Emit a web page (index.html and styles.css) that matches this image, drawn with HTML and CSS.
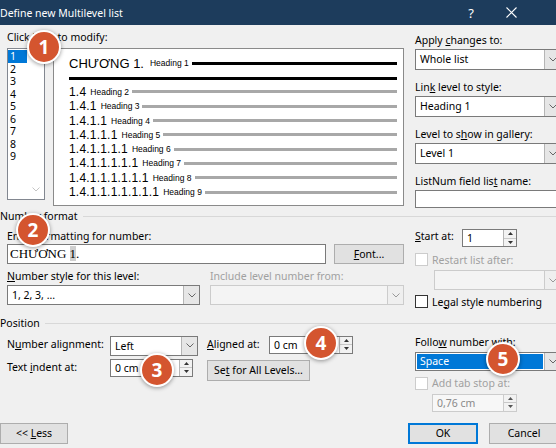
FILE: index.html
```html
<!DOCTYPE html>
<html>
<head>
<meta charset="utf-8">
<link rel="stylesheet" href="styles.css">
</head>
<body>
<div class="dialog">
  <div class="titlebar">
    <span class="title">Define new Multilevel list</span>
    <span class="tb-btn">?</span>
    <span class="tb-btn"><svg width="11" height="11" viewBox="0 0 11 11"><path d="M0.5 0.5 L10.5 10.5 M10.5 0.5 L0.5 10.5" stroke="#fff" stroke-width="1.1" fill="none"/></svg></span>
  </div>

  <div class="top">
    <div class="top-left">
      <div class="lbl">Click level to modify:</div>
      <div class="level-row">
        <div class="listbox">
          <ul class="items">
            <li class="sel">1</li><li>2</li><li>3</li><li>4</li><li>5</li><li>6</li><li>7</li><li>8</li><li>9</li>
          </ul>
          <div class="vscroll"><svg width="8" height="5" viewBox="0 0 8 5"><polyline points="0.5,0.5 4,4 7.5,0.5" fill="none" stroke="#c4c4c4" stroke-width="1"/></svg></div>
        </div>
        <div class="preview">
          <div class="pv-first"><span class="chuong">CHƯƠNG 1.</span><span class="hd">Heading 1</span><span class="ln black"></span></div>
          <div class="pv-rule"></div>
          <div class="pv-row"><span class="num">1.4</span><span class="hd">Heading 2</span><span class="ln"></span></div>
          <div class="pv-row"><span class="num">1.4.1</span><span class="hd">Heading 3</span><span class="ln"></span></div>
          <div class="pv-row"><span class="num">1.4.1.1</span><span class="hd">Heading 4</span><span class="ln"></span></div>
          <div class="pv-row"><span class="num">1.4.1.1.1</span><span class="hd">Heading 5</span><span class="ln"></span></div>
          <div class="pv-row"><span class="num">1.4.1.1.1.1</span><span class="hd">Heading 6</span><span class="ln"></span></div>
          <div class="pv-row"><span class="num">1.4.1.1.1.1.1</span><span class="hd">Heading 7</span><span class="ln"></span></div>
          <div class="pv-row"><span class="num">1.4.1.1.1.1.1.1</span><span class="hd">Heading 8</span><span class="ln"></span></div>
          <div class="pv-row"><span class="num">1.4.1.1.1.1.1.1.1</span><span class="hd">Heading 9</span><span class="ln"></span></div>
        </div>
      </div>
    </div>
    <div class="top-right">
      <div class="field">
        <div class="lbl">Apply <u>c</u>hanges to:</div>
        <div class="select wide"><span class="val">Whole list</span><span class="arrow"><svg width="8" height="5" viewBox="0 0 8 5"><polyline points="0.5,0.5 4,4 7.5,0.5" fill="none" stroke="#666" stroke-width="1"/></svg></span></div>
      </div>
      <div class="field">
        <div class="lbl">Lin<u>k</u> level to style:</div>
        <div class="select wide"><span class="val">Heading 1</span><span class="arrow"><svg width="8" height="5" viewBox="0 0 8 5"><polyline points="0.5,0.5 4,4 7.5,0.5" fill="none" stroke="#666" stroke-width="1"/></svg></span></div>
      </div>
      <div class="field">
        <div class="lbl">Level to s<u>h</u>ow in gallery:</div>
        <div class="select wide"><span class="val">Level 1</span><span class="arrow"><svg width="8" height="5" viewBox="0 0 8 5"><polyline points="0.5,0.5 4,4 7.5,0.5" fill="none" stroke="#666" stroke-width="1"/></svg></span></div>
      </div>
      <div class="field">
        <div class="lbl">ListNum field lis<u>t</u> name:</div>
        <div class="textbox listnum"></div>
      </div>
    </div>
  </div>

  <div class="group-head"><span>Number format</span><span class="rule"></span></div>
  <div class="nf-body">
    <div class="nf-left">
      <div class="lbl">Enter formatting for number:</div>
      <div class="nf-input-row">
        <div class="textbox fmt"><span>CHƯƠNG </span><span class="hl">1</span><span>.</span></div>
        <div class="btn font-btn"><span><u>F</u>ont...</span></div>
      </div>
      <div class="two-col lbl-row">
        <div class="lbl"><u>N</u>umber style for this level:</div>
        <div class="lbl dis">Include level number from:</div>
      </div>
      <div class="two-col">
        <div class="select"><span class="val">1, 2, 3, ...</span><span class="arrow"><svg width="8" height="5" viewBox="0 0 8 5"><polyline points="0.5,0.5 4,4 7.5,0.5" fill="none" stroke="#666" stroke-width="1"/></svg></span></div>
        <div class="select disabled"><span class="val"></span><span class="arrow"><svg width="8" height="5" viewBox="0 0 8 5"><polyline points="0.5,0.5 4,4 7.5,0.5" fill="none" stroke="#999" stroke-width="1"/></svg></span></div>
      </div>
    </div>
    <div class="nf-right">
      <div class="start-row">
        <span class="lbl start-lbl"><u>S</u>tart at:</span>
        <div class="spinbox start"><span class="v">1</span><span class="spin"><span><svg width="5" height="3" viewBox="0 0 5 3"><polygon points="0,3 2.5,0 5,3" fill="#333"/></svg></span><span><svg width="5" height="3" viewBox="0 0 5 3"><polygon points="0,0 2.5,3 5,0" fill="#333"/></svg></span></span></div>
      </div>
      <div class="check-row dis"><span class="cb cb-dis"></span><span>Restart list after:</span></div>
      <div class="select disabled restart"><span class="val"></span><span class="arrow"><svg width="8" height="5" viewBox="0 0 8 5"><polyline points="0.5,0.5 4,4 7.5,0.5" fill="none" stroke="#999" stroke-width="1"/></svg></span></div>
      <div class="check-row legal"><span class="cb"></span><span>Le<u>g</u>al style numbering</span></div>
    </div>
  </div>

  <div class="group-head"><span>Position</span><span class="rule"></span></div>
  <div class="pos-body">
    <div class="pos-left">
      <div class="lbl plbl">N<u>u</u>mber alignment:</div>
      <div class="select align-sel"><span class="val">Left</span><span class="arrow"><svg width="8" height="5" viewBox="0 0 8 5"><polyline points="0.5,0.5 4,4 7.5,0.5" fill="none" stroke="#666" stroke-width="1"/></svg></span></div>
      <div class="lbl plbl col3"><u>A</u>ligned at:</div>
      <div class="spinbox aligned"><span class="v">0 cm</span><span class="spin"><span><svg width="5" height="3" viewBox="0 0 5 3"><polygon points="0,3 2.5,0 5,3" fill="#333"/></svg></span><span><svg width="5" height="3" viewBox="0 0 5 3"><polygon points="0,0 2.5,3 5,0" fill="#333"/></svg></span></span></div>
      <div class="lbl plbl">Text <u>i</u>ndent at:</div>
      <div class="spinbox indent"><span class="v">0 cm</span><span class="spin"><span><svg width="5" height="3" viewBox="0 0 5 3"><polygon points="0,3 2.5,0 5,3" fill="#333"/></svg></span><span><svg width="5" height="3" viewBox="0 0 5 3"><polygon points="0,0 2.5,3 5,0" fill="#333"/></svg></span></span></div>
      <div class="btn setall"><span>Se<u>t</u> for All Levels...</span></div>
    </div>
    <div class="pos-right">
      <div class="lbl">Follo<u>w</u> number with:</div>
      <div class="select wide follow"><span class="val"><span class="hi">Space</span></span><span class="arrow"><svg width="8" height="5" viewBox="0 0 8 5"><polyline points="0.5,0.5 4,4 7.5,0.5" fill="none" stroke="#666" stroke-width="1"/></svg></span></div>
      <div class="check-row dis"><span class="cb cb-dis"></span><span>Add tab stop at:</span></div>
      <div class="spinbox tabstop disabled"><span class="v">0,76 cm</span><span class="spin"><span><svg width="5" height="3" viewBox="0 0 5 3"><polygon points="0,3 2.5,0 5,3" fill="#555"/></svg></span><span><svg width="5" height="3" viewBox="0 0 5 3"><polygon points="0,0 2.5,3 5,0" fill="#555"/></svg></span></span></div>
    </div>
  </div>

  <div class="footer">
    <div class="btn less"><span>&lt;&lt; <u>L</u>ess</span></div>
    <div class="btn ok"><span>OK</span></div>
    <div class="btn cancel"><span>Cancel</span></div>
  </div>

  <div class="badge b1">1</div>
  <div class="badge b2">2</div>
  <div class="badge b3">3</div>
  <div class="badge b4">4</div>
  <div class="badge b5">5</div>
</div>
</body>
</html>
```

FILE: styles.css
```css
* { box-sizing: border-box; }
body {
  margin: 0;
  background: #f0f0f0;
  font-family: "Noto Sans", "Open Sans", sans-serif;
  font-size: 10.5px;
  color: #000;
}
u { text-decoration: underline; text-underline-offset: 1px; }
.dialog {
  position: relative;
  width: 556px;
  height: 448px;
  overflow: hidden;
  background: #f0f0f0;
}
.titlebar {
  height: 25px;
  background: #1d3c5c;
  color: #fff;
  display: flex;
  align-items: center;
  padding-right: 25px;
}
.title { flex: 1; font-size: 10.5px; }
.tb-btn {
  width: 40px;
  text-align: center;
  font-size: 13px;
  display: flex;
  justify-content: center;
  align-items: center;
}
.lbl { line-height: 15px; height: 15px; white-space: nowrap; }
.dis { color: #a0a0a0; }

/* top */
.top { display: flex; height: 183px; }
.top-left { flex: none; width: 415px; padding-left: 7px; padding-top: 5px; }
.level-row { display: flex; margin-top: 3px; }
.listbox {
  width: 38px;
  height: 152px;
  border: 1px solid #828790;
  background: #fff;
  display: flex;
  flex: none;
}
.items { list-style: none; margin: 0; padding: 1px 0 0; width: 19px; }
.items li { height: 12.5px; line-height: 12.5px; padding-left: 2px; }
.items li.sel { background: #0078d7; color: #fff; }
.vscroll {
  flex: 1;
  display: flex;
  align-items: flex-end;
  justify-content: center;
  padding-bottom: 7px;
}
.preview {
  flex: none;
  width: 351px;
  height: 158px;
  margin-left: 8px;
  border: 1px solid #8a8a8a;
  background: #fff;
  padding: 5px 6px 0 15px;
  font-family: "Liberation Sans", Arial, sans-serif;
}
.pv-first { height: 18px; display: flex; align-items: center; }
.chuong { font-size: 13px; }
.hd { font-size: 8.5px; margin-left: 4px; white-space: nowrap; }
.pv-first .hd { margin-left: 6px; }
.ln { flex: 1; height: 3px; background: #a8a8a8; margin-left: 3px; }
.ln.black { background: #000; }
.pv-rule { height: 3px; background: #000; margin-top: 4.5px; margin-bottom: 5.3px; }
.pv-row { height: 14.3px; display: flex; align-items: center; }
.num { font-size: 12px; letter-spacing: 0.2px; white-space: nowrap; }

.top-right { flex: 1; min-width: 0; padding-top: 8px; }
.field { margin-bottom: 10px; }
.field .lbl { margin-bottom: 1px; }

.select {
  display: flex;
  height: 20px;
  border: 1px solid #7a7a7a;
  background: #fff;
}
.select .val { flex: 1; padding-left: 4px; line-height: 18px; white-space: nowrap; overflow: hidden; }
.select .arrow {
  width: 16px;
  flex: none;
  background: #e6e6e6;
  border-left: 1px solid #b5b5b5;
  display: flex;
  align-items: center;
  justify-content: center;
}
.select.wide { width: 146px; height: 21px; }
.select.wide .val { line-height: 19px; }
.select.disabled { border-color: #cccccc; background: #f4f4f4; }
.select.disabled .arrow { background: #efefef; border-left-color: #cccccc; }

.textbox { border: 1px solid #7a7a7a; background: #fff; }
.textbox.listnum { width: 146px; height: 18px; }

/* group heads */
.group-head { display: flex; align-items: center; height: 15px; margin-top: 0.5px; line-height: 15px; }
.group-head .rule { flex: 1; border-top: 1px solid #d8d8d8; margin-left: 5px; }

/* number format */
.nf-body { display: flex; height: 92px; }
.nf-left { flex: none; width: 404px; padding-left: 7px; padding-top: 5px; }
.nf-input-row { display: flex; margin-top: 0.5px; }
.textbox.fmt {
  width: 319px;
  height: 20px;
  padding-left: 2px;
  font-family: "Liberation Serif", "Times New Roman", serif;
  font-size: 13px;
  line-height: 18px;
  white-space: nowrap;
}
.hl { background: #cfcfcf; }
.btn {
  background: #e1e1e1;
  border: 1px solid #adadad;
  display: flex;
  align-items: center;
  justify-content: center;
  white-space: nowrap;
  flex: none;
}
.font-btn { width: 70px; height: 20px; margin-left: 8px; }
.two-col { display: grid; grid-template-columns: 193px 194px; column-gap: 10px; }
.lbl-row { margin-top: 4.5px; }
.lbl-row + .two-col { margin-top: 1.5px; }

.nf-right { flex: 1; min-width: 0; margin-left: 11px; padding-top: 5.5px; }
.start-row { display: flex; align-items: flex-start; height: 18px; }
.start-lbl { width: 47px; flex: none; }
.spinbox {
  display: flex;
  height: 18px;
  border: 1px solid #7a7a7a;
  background: #fff;
  flex: none;
}
.spinbox .v { flex: 1; padding-left: 4px; line-height: 16px; white-space: nowrap; }
.spin {
  width: 13px;
  display: flex;
  flex-direction: column;
  border-left: 1px solid #b5b5b5;
  background: #f2f2f2;
}
.spin > span { flex: 1; display: flex; align-items: center; justify-content: center; }
.spin > span + span { border-top: 1px solid #c8c8c8; }
.spinbox.start { width: 55px; }
.check-row { display: flex; align-items: center; height: 13px; margin-top: 6px; white-space: nowrap; }
.cb { width: 13px; height: 13px; border: 1px solid #333; background: #fff; margin-right: 4px; flex: none; }
.cb-dis { border-color: #cccccc; }
.select.restart { width: 127px; height: 20px; margin-left: 19px; margin-top: 4px; }
.check-row.legal { margin-top: 5px; }

/* position */
.pos-body { display: flex; height: 91.5px; }
.pos-left {
  flex: none;
  width: 404px;
  padding-left: 7px;
  padding-top: 4.5px;
  display: grid;
  grid-template-columns: 103px 88px 71px 84px;
  grid-template-rows: 20px 22px;
  row-gap: 3px;
  align-content: start;
  align-items: start;
}
.plbl { line-height: 16px; height: 16px; }
.col3 { padding-left: 9px; }
.align-sel { width: 88px; height: 20px; }
.spinbox.aligned { width: 84px; }
.spinbox.indent { width: 83px; }
.setall { grid-column: 3 / 5; justify-self: start; margin-left: 9px; width: 103px; height: 21px; margin-top: 1px; }

.pos-right { flex: 1; min-width: 0; margin-left: 11px; padding-top: 4px; }
.select.follow { height: 19px; margin-top: 1.5px; }
.select.follow .val { padding: 1px; line-height: 15px; display: flex; }
.hi { flex: 1; background: #0078d7; color: #fff; padding-left: 3px; }
.pos-right .check-row { margin-top: 6px; }
.spinbox.tabstop { width: 85px; margin-left: 17px; margin-top: 4px; }
.spinbox.disabled { border-color: #cccccc; background: #f7f7f7; color: #8a8a8a; }
.spinbox.disabled .spin { border-left-color: #cccccc; }

/* footer */
.footer { display: flex; height: 21px; }
.less { width: 68px; height: 21px; }
.ok { width: 70px; height: 21px; margin-left: 340px; border: 1px solid #0078d7; box-shadow: inset 0 0 0 1px #0078d7; }
.cancel { width: 70px; height: 21px; margin-left: 11px; }

/* badges */
.badge {
  position: absolute;
  width: 34px;
  height: 34px;
  border-radius: 50%;
  background: #d4552f;
  border: 2.5px solid #fff;
  box-shadow: 0 1px 4px rgba(0,0,0,0.4);
  color: #fff;
  font-family: "Open Sans", "Noto Sans", sans-serif;
  font-weight: 700;
  font-size: 19px;
  display: flex;
  align-items: center;
  justify-content: center;
}
.b1 { left: 27px; top: 30px; }
.b2 { left: 16px; top: 213px; }
.b3 { left: 140px; top: 353px; }
.b4 { left: 304px; top: 326px; }
.b5 { left: 486px; top: 342px; }
```
